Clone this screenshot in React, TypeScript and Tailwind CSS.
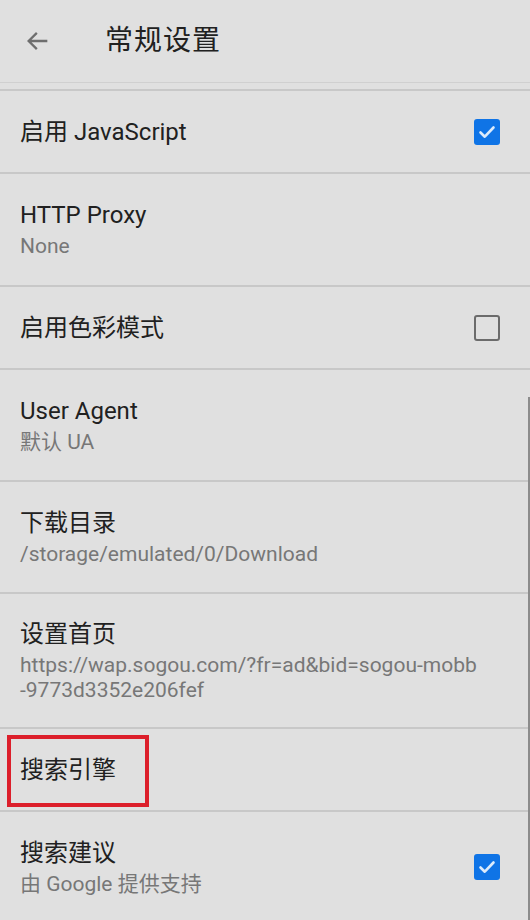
const ROWS: {
  title: string;
  sub?: string[];
  check?: boolean;
  h: string;
  mark?: boolean;
}[] = [
  { title: "启用 JavaScript", check: true, h: "h-[83px]" },
  { title: "HTTP Proxy", sub: ["None"], h: "h-[113px]" },
  { title: "启用色彩模式", check: false, h: "h-[83px]" },
  { title: "User Agent", sub: ["默认 UA"], h: "h-[112px]" },
  { title: "下载目录", sub: ["/storage/emulated/0/Download"], h: "h-[112px]" },
  {
    title: "设置首页",
    sub: ["https://wap.sogou.com/?fr=ad&bid=sogou-mobb", "-9773d3352e206fef"],
    h: "h-[135px]",
  },
  { title: "搜索引擎", h: "h-[83px]", mark: true },
  { title: "搜索建议", sub: ["由 Google 提供支持"], check: true, h: "h-[112px]" },
];

function Box({ on }: { on: boolean }) {
  if (on)
    return (
      <div className="w-[26px] h-[26px] rounded-[3px] bg-[#0f74e6] flex items-center justify-center">
        <svg width="20" height="20" viewBox="0 0 20 20" fill="none">
          <path d="M3.5 10.5l4.3 4.2L16.5 5.5" stroke="#dcebfb" strokeWidth="2.6" strokeLinecap="round" strokeLinejoin="round" />
        </svg>
      </div>
    );
  return <div className="w-[26px] h-[26px] rounded-[3px] border-[2.5px] border-[#6b6b6b]" />;
}

export default function App() {
  return (
    <div
      className="relative w-[530px] h-[920px] overflow-hidden bg-[#e0e0e0]"
      style={{ fontFamily: 'Roboto, "Noto Sans CJK SC", sans-serif' }}
    >
      <header className="h-[83px] flex items-center border-b border-[#d0d0d0]">
        <svg className="ml-[24px]" width="28" height="28" viewBox="0 0 24 24" fill="none">
          <path d="M20 12H4.5M11 5l-7 7 7 7" stroke="#6e6e6e" strokeWidth="2" />
        </svg>
        <h1 className="ml-[53px] text-[28px] text-[#212121] tracking-[1px]">常规设置</h1>
      </header>
      <div className="h-[6px]" />
      <ul className="border-t-2 border-[#c8c8c8]">
        {ROWS.map((r) => (
          <li
            key={r.title}
            className={`relative flex items-center justify-between pl-[20px] pr-[30px] border-b-2 border-[#c8c8c8] ${r.h}`}
          >
            <div className="flex flex-col">
              <span className="text-[24px] leading-[30px] text-[#212121]">{r.title}</span>
              {r.sub && (
                <div className="mt-[4px] flex flex-col">
                  {r.sub.map((s) => (
                    <span key={s} className="text-[21px] leading-[25px] text-[#777777]">
                      {s}
                    </span>
                  ))}
                </div>
              )}
            </div>
            {r.check !== undefined && <Box on={r.check} />}
            {r.mark && (
              <div className="absolute left-[7px] top-[6px] w-[142px] h-[72px] border-[4px] border-[#dc1f2b]" />
            )}
          </li>
        ))}
      </ul>
      <div className="absolute right-0 top-[397px] bottom-0 w-[2px] bg-[#8c8c8c]" />
    </div>
  );
}
